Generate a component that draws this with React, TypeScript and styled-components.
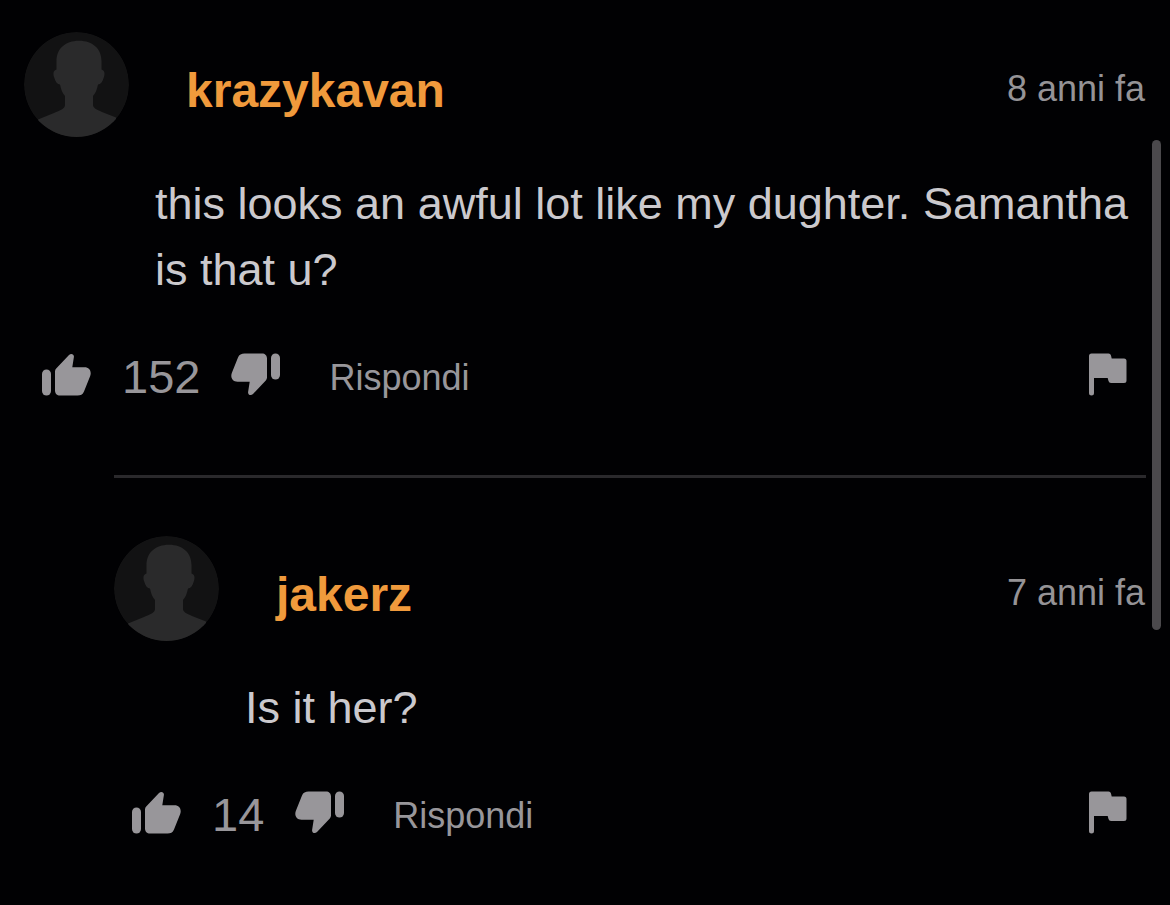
import React from "react";
import styled, { createGlobalStyle } from "styled-components";

const GlobalStyle = createGlobalStyle`
  * { box-sizing: border-box; }
  body {
    margin: 0;
    background: #010103;
    font-family: "Liberation Sans", Arial, sans-serif;
    overflow: hidden;
  }
`;

const Page = styled.main`
  position: relative;
  min-height: 100vh;
  padding: 32px 24px;
`;

const ScrollThumb = styled.div`
  position: absolute;
  top: 140px;
  right: 9px;
  width: 9px;
  height: 490px;
  border-radius: 5px;
  background: #4b494c;
`;

const Comment = styled.article``;

const Replies = styled.section`
  margin: 79px 0 0 90px;
  padding-top: 58px;
  border-top: 3px solid #2a292c;
`;

const Header = styled.header`
  display: flex;
  align-items: center;
  height: 105px;
`;

const AvatarSvg = styled.svg`
  flex: none;
  width: 105px;
  height: 105px;
  border-radius: 50%;
`;

const Author = styled.a`
  margin-left: 57px;
  padding-top: 12px;
  color: #f09a3c;
  font-size: 48px;
  font-weight: 700;
  line-height: 56px;
  text-decoration: none;
`;

const Age = styled.time`
  margin-left: auto;
  padding: 8px 1px 0 0;
  color: #959396;
  font-size: 36px;
  line-height: 40px;
`;

const Body = styled.p`
  margin: 34px 0 50px;
  padding-left: 131px;
  color: #cbc9cd;
  font-size: 45px;
  line-height: 66px;
`;

const Actions = styled.div`
  display: flex;
  align-items: center;
  height: 43px;
  padding: 0 19px 0 18px;
  color: #98969a;
`;

const IconButton = styled.button`
  display: flex;
  flex: none;
  padding: 0;
  border: 0;
  background: none;
  color: inherit;
  cursor: pointer;
`;

const FlagButton = styled(IconButton)`
  margin-left: auto;
`;

const Count = styled.span`
  margin: 0 31px;
  padding-top: 4px;
  font-size: 47px;
  line-height: 56px;
`;

const ReplyButton = styled(IconButton)`
  margin-left: 49px;
  padding-top: 6px;
  font-family: inherit;
  font-size: 36px;
  line-height: 40px;
`;

const Avatar = () => (
  <AvatarSvg viewBox="0 0 105 105" aria-hidden="true">
    <circle cx="52.5" cy="52.5" r="52.5" fill="#121213" />
    <path
      fill="#2a2a2b"
      d="M55 8.7C41 8.7 32.5 17 32.5 29V37.5C29 38.5 29 42 30.2 45.5C31.5 50 33.5 52.5 36 52.5C37 57.5 38.5 61.5 41 64V73C41 76.5 36 78.5 30 81L14 87.5V105H92V85.5L78 80C72.5 77.5 69 76 69 73V64C71.5 61.5 73 57.5 74 52.5C76.5 52.5 78.5 50 79.8 45.500C81 42 81 38.5 77.5 37.5V29C77.5 17 69 8.7 55 8.7Z"
    />
  </AvatarSvg>
);

const Thumb = ({ down = false }: { down?: boolean }) => (
  <svg width="49" height="43" viewBox="0 0 49 43" fill="currentColor" aria-hidden="true">
    <g transform={down ? "rotate(180 24.5 21.5)" : undefined}>
      <rect x="0" y="16.5" width="9" height="26" rx="4.5" />
      <path d="M13 18.5Q13 16.8 14.2 15.6L27 2C29 0 32.3 1 31.9 4L30.3 14.3H42.5C47.5 14.3 49.8 18.5 48.2 23L42 38.5C40.8 41.5 38.5 42.5 35.5 42.5H18C15 42.5 13 40.5 13 37.5Z" />
    </g>
  </svg>
);

const Flag = () => (
  <svg width="38" height="43" viewBox="0 0 38 43" fill="currentColor" aria-hidden="true">
    <path d="M2.5 .5H19.5Q21.5 .5 22 2.5L22.7 5.5H35Q37.5 5.5 37.5 8V27.5Q37.5 30 35 30H22Q20 30 19.500 28L18.7 25H5V40Q5 42.500 2.5 42.5T0 40V3Q0 .5 2.5 .5Z" />
  </svg>
);

interface CommentData {
  author: string;
  age: string;
  text: string;
  votes: number;
}

const CommentItem = ({ data, children }: { data: CommentData; children?: React.ReactNode }) => (
  <Comment>
    <Header>
      <Avatar />
      <Author href="#">{data.author}</Author>
      <Age>{data.age}</Age>
    </Header>
    <Body>{data.text}</Body>
    <Actions>
      <IconButton type="button" aria-label="Mi piace"><Thumb /></IconButton>
      <Count>{data.votes}</Count>
      <IconButton type="button" aria-label="Non mi piace"><Thumb down /></IconButton>
      <ReplyButton type="button">Rispondi</ReplyButton>
      <FlagButton type="button" aria-label="Segnala"><Flag /></FlagButton>
    </Actions>
    {children}
  </Comment>
);

const comment: CommentData = {
  author: "krazykavan",
  age: "8 anni fa",
  text: "this looks an awful lot like my dughter. Samantha is that u?",
  votes: 152,
};

const reply: CommentData = {
  author: "jakerz",
  age: "7 anni fa",
  text: "Is it her?",
  votes: 14,
};

export default function App() {
  return (
    <Page>
      <GlobalStyle />
      <CommentItem data={comment}>
        <Replies>
          <CommentItem data={reply} />
        </Replies>
      </CommentItem>
      <ScrollThumb />
    </Page>
  );
}
